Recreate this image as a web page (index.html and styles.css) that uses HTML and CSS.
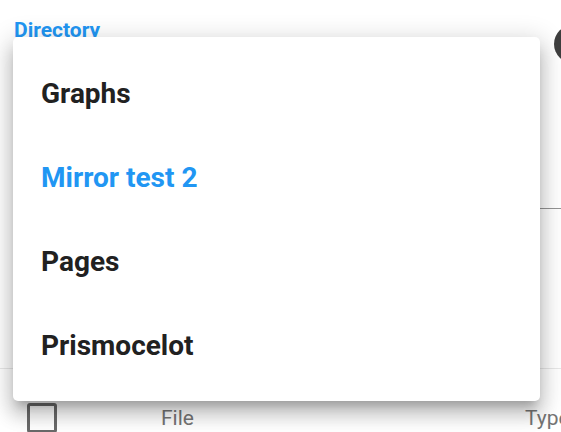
FILE: index.html
```html
<!DOCTYPE html>
<html>
<head>
<meta charset="utf-8">
<link rel="stylesheet" href="styles.css">
</head>
<body>
<div class="page">
  <div class="toolbar">
    <label class="field-label">Directory</label>
    <span class="avatar"></span>
  </div>
  <div class="field"></div>
  <div class="table">
    <div class="head-row">
      <span class="checkbox"></span>
      <span class="col col-file">File</span>
      <span class="col col-type">Type</span>
    </div>
  </div>
</div>
<ul class="menu">
  <li class="menu-item">Graphs</li>
  <li class="menu-item selected">Mirror test 2</li>
  <li class="menu-item">Pages</li>
  <li class="menu-item">Prismocelot</li>
</ul>
</body>
</html>
```
FILE: styles.css
```css
html, body {
  margin: 0;
  padding: 0;
  background: #ffffff;
  width: 561px;
  height: 432px;
  overflow: hidden;
  font-family: Roboto, "Liberation Sans", sans-serif;
}
.page {
  position: relative;
  width: 561px;
  height: 432px;
}
.toolbar {
  display: flex;
  justify-content: space-between;
  align-items: flex-start;
  height: 50px;
  padding: 20px 0 0 14px;
}
.field-label {
  font-size: 21px;
  line-height: 21px;
  font-weight: 700;
  color: #2196f3;
}
.avatar {
  width: 38px;
  height: 38px;
  border-radius: 50%;
  background: #3e3e3e;
  margin-top: 5px;
  margin-right: -31px;
  flex: none;
}
.field {
  height: 138px;
  margin-left: 14px;
  border-bottom: 1px solid rgba(0, 0, 0, 0.42);
}
.table {
  margin-top: 159px;
  border-top: 1px solid #e8e8e8;
}
.head-row {
  display: flex;
  align-items: center;
  padding: 34px 0 0 27px;
  white-space: nowrap;
}
.checkbox {
  box-sizing: border-box;
  width: 30px;
  height: 30px;
  border: 3px solid #6a6a6a;
  border-radius: 3px;
  flex: none;
}
.col {
  font-size: 21px;
  line-height: 30px;
  color: #757575;
}
.col-file {
  margin-left: 104px;
  width: 364px;
  flex: none;
}
.menu {
  position: absolute;
  left: 13px;
  top: 37px;
  width: 527px;
  margin: 0;
  padding: 14px 0;
  list-style: none;
  background: #ffffff;
  border-radius: 5px;
  box-shadow: 0 9px 9px -5px rgba(0, 0, 0, 0.2),
              0 14px 17px 2px rgba(0, 0, 0, 0.14),
              0 5px 25px 5px rgba(0, 0, 0, 0.14);
}
.menu-item {
  height: 84px;
  display: flex;
  align-items: center;
  padding-left: 28px;
  font-size: 28px;
  font-weight: 700;
  color: #212121;
}
.menu-item.selected {
  color: #2196f3;
}
```
